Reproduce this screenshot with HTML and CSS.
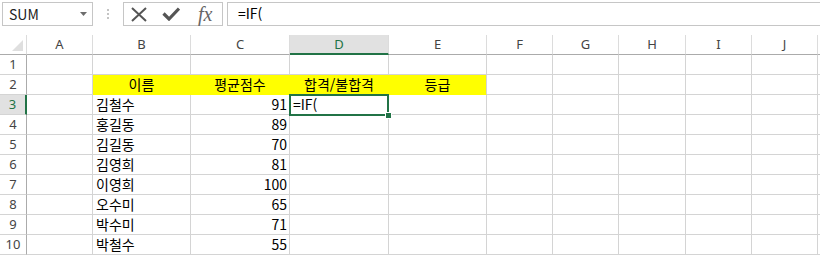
FILE: index.html
```html
<!DOCTYPE html>
<html lang="ko">
<head>
    <meta charset="UTF-8">
    <meta name="viewport" content="width=device-width, initial-scale=1.0">
    <title>IF 함수</title>
    <link rel="stylesheet" href="styles.css">
</head>
<body>

    <div class="formula-bar">
        <div class="name-box">
            <span>SUM</span>
            <svg class="caret" width="7" height="4" viewBox="0 0 7 4"><path d="M0 0h7L3.5 4z" fill="#6d6d6d"/></svg>
        </div>
        <div class="grip"><i></i><i></i><i></i></div>
        <div class="fn-buttons">
            <svg class="btn-cancel" width="18" height="15" viewBox="0 0 18 15"><path d="M2 1L16 14M16 1L2 14" stroke="#555" stroke-width="2" fill="none"/></svg>
            <svg class="btn-enter" width="18" height="14" viewBox="0 0 18 14"><path d="M1.5 6.5L7 12L17 1.5" stroke="#555" stroke-width="3.2" fill="none"/></svg>
            <span class="fx">fx</span>
        </div>
        <div class="formula-input">=IF(</div>
    </div>

    <div class="sheet">
        <div class="row head">
            <div class="corner"></div>
            <div>A</div><div>B</div><div>C</div><div class="sel">D</div><div>E</div>
            <div>F</div><div>G</div><div>H</div><div>I</div><div>J</div><div></div>
        </div>
        <div class="row">
            <div class="num">1</div>
            <div></div><div></div><div></div><div></div><div></div>
            <div></div><div></div><div></div><div></div><div></div><div></div>
        </div>
        <div class="row">
            <div class="num">2</div>
            <div></div>
            <div class="fill center">이름</div>
            <div class="fill center">평균점수</div>
            <div class="fill center">합격/불합격</div>
            <div class="fill center last">등급</div>
            <div></div><div></div><div></div><div></div><div></div><div></div>
        </div>
        <div class="row">
            <div class="num sel">3</div>
            <div></div><div>김철수</div><div class="val">91</div>
            <div class="active">=IF(</div><div></div>
            <div></div><div></div><div></div><div></div><div></div><div></div>
        </div>
        <div class="row">
            <div class="num">4</div>
            <div></div><div>홍길동</div><div class="val">89</div><div></div><div></div>
            <div></div><div></div><div></div><div></div><div></div><div></div>
        </div>
        <div class="row">
            <div class="num">5</div>
            <div></div><div>김길동</div><div class="val">70</div><div></div><div></div>
            <div></div><div></div><div></div><div></div><div></div><div></div>
        </div>
        <div class="row">
            <div class="num">6</div>
            <div></div><div>김영희</div><div class="val">81</div><div></div><div></div>
            <div></div><div></div><div></div><div></div><div></div><div></div>
        </div>
        <div class="row">
            <div class="num">7</div>
            <div></div><div>이영희</div><div class="val">100</div><div></div><div></div>
            <div></div><div></div><div></div><div></div><div></div><div></div>
        </div>
        <div class="row">
            <div class="num">8</div>
            <div></div><div>오수미</div><div class="val">65</div><div></div><div></div>
            <div></div><div></div><div></div><div></div><div></div><div></div>
        </div>
        <div class="row">
            <div class="num">9</div>
            <div></div><div>박수미</div><div class="val">71</div><div></div><div></div>
            <div></div><div></div><div></div><div></div><div></div><div></div>
        </div>
        <div class="row">
            <div class="num">10</div>
            <div></div><div>박철수</div><div class="val">55</div><div></div><div></div>
            <div></div><div></div><div></div><div></div><div></div><div></div>
        </div>
    </div>

</body>
</html>
```

FILE: styles.css
```css
body {
    margin: 0;
    padding: 0;
    background: #fff;
    overflow: hidden;
    font-family: "Noto Sans CJK KR", "Noto Sans", sans-serif;
    color: #000;
}

/* formula bar */
.formula-bar {
    display: flex;
    align-items: center;
    height: 24px;
    margin-top: 2px;
}

.name-box {
    display: flex;
    align-items: center;
    box-sizing: border-box;
    width: 91px;
    height: 24px;
    margin-left: 2px;
    padding-left: 6px;
    border: 1px solid #c6c6c6;
    font-size: 14px;
    color: #222;
}

.name-box .caret {
    margin-left: auto;
    margin-right: 5px;
}

.grip {
    display: flex;
    flex-direction: column;
    align-items: center;
    gap: 2px;
    width: 30px;
}

.grip i {
    display: block;
    width: 2px;
    height: 2px;
    background: #c4c4c4;
}

.fn-buttons {
    display: flex;
    align-items: center;
    box-sizing: border-box;
    width: 100px;
    height: 24px;
    border: 1px solid #c6c6c6;
    padding-left: 6px;
}

.btn-enter {
    margin-left: 14px;
}

.fx {
    margin-left: 18px;
    font-family: "Liberation Serif", serif;
    font-style: italic;
    font-size: 20px;
    line-height: 20px;
    color: #666;
}

.formula-input {
    flex: 1;
    box-sizing: border-box;
    height: 24px;
    margin-left: 4px;
    padding-left: 10px;
    border: 1px solid #c6c6c6;
    border-right: none;
    font-size: 14px;
    line-height: 21px;
}

/* sheet */
.sheet {
    margin-top: 9px;
    overflow: hidden;
}

.row {
    display: grid;
    grid-template-columns: 27px 66px 98px 99px 99px 98px 66px 66px 67px 66px 66px 2px;
    height: 20px;
}

.row > div {
    box-sizing: border-box;
    height: 20px;
    border-right: 1px solid #d4d4d4;
    border-bottom: 1px solid #d4d4d4;
    padding: 0 3px;
    font-size: 14px;
    line-height: 19px;
    white-space: nowrap;
}

.row > div:last-child {
    border-right: none;
    padding: 0;
}

.row.head > div {
    border-right-color: #dcdcdc;
    border-bottom-color: #ababab;
    font-family: "Noto Sans", sans-serif;
    font-size: 13px;
    text-align: center;
    color: #444;
}

.row.head > .sel {
    background: #e1e1e1;
    color: #217346;
    border-bottom: 2px solid #217346;
}

.corner {
    position: relative;
}

.corner::after {
    content: "";
    position: absolute;
    right: 3px;
    bottom: 3px;
    border-style: solid;
    border-width: 0 0 11px 11px;
    border-color: transparent transparent #dfdfdf transparent;
}

.row > .num {
    border-right-color: #ababab;
    font-family: "Noto Sans", sans-serif;
    font-size: 13px;
    text-align: center;
    color: #444;
    padding: 0;
}

.row > .num.sel {
    background: #e1e1e1;
    color: #217346;
    border-right: 2px solid #217346;
}

.row > .fill {
    background: #ffff00;
    border-color: #ffff00;
}

.row > .fill.last {
    border-right-color: #d4d4d4;
}

.center {
    text-align: center;
}

.row > .val {
    text-align: right;
    padding-right: 2px;
}

.row > .active {
    position: relative;
}

.active::after {
    content: "";
    position: absolute;
    left: -1px;
    top: -1px;
    right: -1px;
    bottom: -2px;
    border: 2px solid #217346;
}

.active::before {
    content: "";
    position: absolute;
    right: -4px;
    bottom: -5px;
    width: 5px;
    height: 5px;
    background: #217346;
    border: 1px solid #fff;
    z-index: 1;
}
```
